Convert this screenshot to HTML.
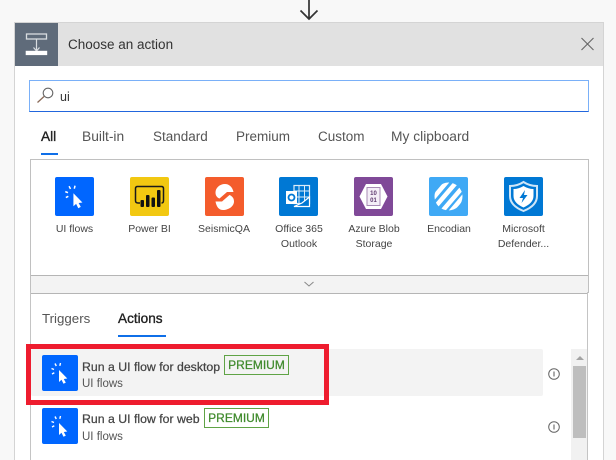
<!DOCTYPE html>
<html><head><meta charset="utf-8">
<style>
html,body{margin:0;padding:0}
body{width:616px;height:460px;position:relative;overflow:hidden;background:#f8f8f8;font-family:"Liberation Sans",sans-serif;color:#333}
#w{position:absolute;left:0;top:0;width:616px;height:460px;overflow:hidden;filter:blur(.3px)}
.a{position:absolute}
.t{position:absolute;white-space:nowrap;line-height:16px}
.ic{position:absolute;top:177px;width:39px;height:39px;border-radius:2px;overflow:hidden}
.lb{position:absolute;width:74px;text-align:center;font-size:10.5px;line-height:15px;color:#444;top:222px}
.tab{position:absolute;top:129px;font-size:13.5px;line-height:16px;color:#555;white-space:nowrap}
.sel{color:#222;font-size:13.7px;-webkit-text-stroke:.35px #222}
.badge{position:absolute;height:18px;width:63px;border:1px solid #5fa345;color:#3f8a2c;font-size:12px;line-height:19px;text-align:center;-webkit-text-stroke:.25px #3f8a2c}
.ri{position:absolute;left:42px;width:36px;height:36px;background:#0066ff;border-radius:2px}
.rt{position:absolute;left:82px;font-size:12.3px;color:#444;white-space:nowrap;line-height:14px;-webkit-text-stroke:.25px #444}
.rs{position:absolute;left:82px;font-size:11.5px;color:#555;white-space:nowrap;line-height:14px}
</style></head><body>
<div id="w">
<svg class="a" style="left:296px;top:0" width="28" height="22" viewBox="0 0 28 22"><path d="M13 0V19M4.500 10.500L13 19L21.500 10.500" fill="none" stroke="#333" stroke-width="1.700"/></svg>

<div class="a" style="left:14px;top:22px;width:588px;height:438px;background:#fff;border:1px solid #d4d4d4;border-bottom:0"></div>
<div class="a" style="left:15px;top:23px;width:588px;height:43px;background:#e1e1e1"></div>
<div class="a" style="left:15px;top:23px;width:43px;height:43px;background:#5f6b7a"></div>
<svg class="a" style="left:15px;top:23px" width="43" height="43" viewBox="0 0 43 43"><rect x="11.500" y="11" width="20" height="5" fill="none" stroke="#d8dce0" stroke-width="1.300"/><path d="M21.500 16V27M18.500 24.500L21.500 28L24.500 24.500" fill="none" stroke="#d8dce0" stroke-width="1.200"/><rect x="10.700" y="27.800" width="21.500" height="4.300" fill="#fff"/></svg>
<div class="t" style="left:68px;top:37px;font-size:13.500px;color:#333">Choose an action</div>
<svg class="a" style="left:580px;top:37px" width="15" height="15" viewBox="0 0 15 15"><path d="M1.500 1L13.500 13M13.500 1L1.500 13" stroke="#666" stroke-width="1.100" fill="none"/></svg>

<div class="a" style="left:29px;top:80px;width:558px;height:30px;border:1px solid #7ab0f8;border-bottom-color:#2266dd"></div>
<svg class="a" style="left:36px;top:87px" width="18" height="18" viewBox="0 0 18 18"><circle cx="12" cy="6" r="4.800" fill="none" stroke="#666" stroke-width="1.100"/><path d="M8 9.500L1.500 15.500" stroke="#8a6a58" stroke-width="1.300"/></svg>
<div class="t" style="left:60px;top:89px;font-size:12.500px;color:#333">ui</div>

<div class="tab sel" style="left:41px">All</div>
<div class="tab" style="left:82px;font-size:13.8px">Built-in</div>
<div class="tab" style="left:153px">Standard</div>
<div class="tab" style="left:236px">Premium</div>
<div class="tab" style="left:318px">Custom</div>
<div class="tab" style="left:391px;font-size:13.8px">My clipboard</div>
<div class="a" style="left:41px;top:153px;width:17px;height:2px;background:#0f6fe8"></div>

<div class="a" style="left:30px;top:159px;width:557px;height:133px;border:1px solid #c0c0c0;border-width:1px 1px 0 1px"></div>
<div class="a" style="left:31px;top:275px;width:557px;height:17px;background:#f3f3f3;border-top:1px solid #b5b5b5;border-bottom:1px solid #b5b5b5"></div>
<svg class="a" style="left:303px;top:281px" width="12" height="7" viewBox="0 0 12 7"><path d="M1.500 1L6 5L10.500 1" fill="none" stroke="#888" stroke-width="1"/></svg>
<div class="a" style="left:30px;top:292px;width:1px;height:168px;background:#c4c4c4"></div>
<div class="a" style="left:587px;top:292px;width:1px;height:168px;background:#c4c4c4"></div>

<!-- connectors -->
<div class="ic" style="left:55px;background:#0066ff"><svg width="39" height="39" viewBox="0 0 36 36"><g fill="none" stroke="#fff" stroke-width="1.400"><path d="M13 8.500L14.300 11M18.500 8L17.800 10.800M9.500 13.500L12 14.500M10 19L12.300 17.800"/></g><path d="M17 15L17 27L19.500 24.800L21.500 28.800L23.800 27.600L21.800 24L25.300 23.500Z" fill="#fff"/></svg></div>
<div class="ic" style="left:130px;background:#f2c811"><svg width="39" height="39" viewBox="0 0 39 39"><path d="M10 26H8Q5.500 26 5.500 23.500V11.500Q5.500 9.500 7.500 9.500H31.500Q33.500 9.500 33.500 11.500V23.500Q33.500 26 31.500 26" fill="none" stroke="#1a1a1a" stroke-width="1.500"/><rect x="10.500" y="23" width="3.500" height="7" rx="1" fill="#111"/><rect x="16" y="18" width="3.500" height="12" rx="1" fill="#111"/><rect x="21.500" y="20.500" width="3.500" height="9.500" rx="1" fill="#111"/><rect x="27" y="13" width="3.500" height="17" rx="1" fill="#111"/></svg></div>
<div class="ic" style="left:205px;background:#f45c2c"><svg width="39" height="39" viewBox="0 0 39 39"><path d="M20 7C14.500 7 10.500 11 10.500 15.500C10.500 18.500 12 20.500 14.500 21.500L22 15H28.500C27.500 10 24 7 20 7Z" fill="#fff"/><path d="M18 33C24 33 29 29 29 24.500C29 21 27 19 24.500 18L17 24.500H10.500C11.500 30 14 33 18 33Z" fill="#fff"/></svg></div>
<div class="ic" style="left:279px;background:#0078d4"><svg width="40" height="39" viewBox="0 0 40 39"><rect x="15" y="8.500" width="15.500" height="18" fill="none" stroke="#dcebf8" stroke-width="1.200"/><path d="M15 14H30.500M15 20H30.500M20 8.500V26M25.500 8.500V26" stroke="#dcebf8" stroke-width="1"/><path d="M15 29.500H30.500V20L23 26Z" fill="#0078d4" stroke="#fff" stroke-width="1.200"/><rect x="7" y="14" width="11" height="13" fill="#fff"/><circle cx="12.500" cy="20.500" r="3" fill="none" stroke="#0078d4" stroke-width="1.800"/></svg></div>
<div class="ic" style="left:354px;background:#804998"><svg width="39" height="39" viewBox="0 0 39 39"><path d="M12 7H27L33.500 19.500L27 32H12L5.500 19.500Z" fill="#fff"/><rect x="13" y="10.500" width="13" height="18" fill="#f4eef7" stroke="#a78bb5" stroke-width="1"/><text x="19.500" y="18" font-size="6" font-family="Liberation Sans" font-weight="bold" fill="#5f3a70" text-anchor="middle">10</text><text x="19.500" y="25" font-size="6" font-family="Liberation Sans" font-weight="bold" fill="#5f3a70" text-anchor="middle">01</text></svg></div>
<div class="ic" style="left:429px;background:#3fa9f5"><svg width="39" height="39" viewBox="0 0 39 39"><defs><clipPath id="e"><circle cx="19.500" cy="19.500" r="14"/></clipPath></defs><g clip-path="url(#e)" stroke="#fff" stroke-width="4.500"><path d="M0 26L22 0M1 36L31 1M9 39L39 4M18 39L40 13"/></g></svg></div>
<div class="ic" style="left:504px;background:#0078d4"><svg width="39" height="39" viewBox="0 0 39 39"><path d="M19.500 5C15 8 11 9 6 9V19C6 26 12 31 19.500 34C27 31 33 26 33 19V9C28 9 24 8 19.500 5Z" fill="none" stroke="#cfe6f8" stroke-width="2"/><path d="M19.500 9C16 11 13 12 9.500 12V19C9.500 24.500 14 28 19.500 30.500C25 28 29.500 24.500 29.500 19V12C26 12 23 11 19.500 9Z" fill="#fff"/><path d="M21 13L15.500 21H19L17.500 26L23.500 18H20Z" fill="#0078d4"/></svg></div>

<div class="lb" style="left:37.500px">UI flows</div>
<div class="lb" style="left:112.500px">Power BI</div>
<div class="lb" style="left:187px">SeismicQA</div>
<div class="lb" style="left:262px">Office 365<br>Outlook</div>
<div class="lb" style="left:337px">Azure Blob<br>Storage</div>
<div class="lb" style="left:412px">Encodian</div>
<div class="lb" style="left:486.500px">Microsoft<br>Defender...</div>

<div class="tab" style="left:42px;top:311px;font-size:13.3px">Triggers</div>
<div class="tab sel" style="left:118px;top:311px;font-size:13.6px">Actions</div>
<div class="a" style="left:118px;top:335px;width:48px;height:2px;background:#0f6fe8"></div>

<!-- rows -->
<div class="a" style="left:31px;top:349px;width:512px;height:47px;background:#f3f3f3;border-radius:2px"></div>
<div class="ri" style="top:355px"><svg width="36" height="36" viewBox="0 0 36 36"><g fill="none" stroke="#fff" stroke-width="1.400"><path d="M13 8.500L14.300 11M18.500 8L17.800 10.800M9.500 13.500L12 14.500M10 19L12.300 17.800"/></g><path d="M17 15L17 27L19.500 24.800L21.500 28.800L23.800 27.600L21.800 24L25.300 23.500Z" fill="#fff"/></svg></div>
<div class="rt" style="top:360px">Run a UI flow for desktop</div>
<div class="rs" style="top:377px">UI flows</div>
<div class="badge" style="left:224px;top:355px">PREMIUM</div>

<div class="ri" style="top:408px"><svg width="36" height="36" viewBox="0 0 36 36"><g fill="none" stroke="#fff" stroke-width="1.400"><path d="M13 8.500L14.300 11M18.500 8L17.800 10.800M9.500 13.500L12 14.500M10 19L12.300 17.800"/></g><path d="M17 15L17 27L19.500 24.800L21.500 28.800L23.800 27.600L21.800 24L25.300 23.500Z" fill="#fff"/></svg></div>
<div class="rt" style="top:412px">Run a UI flow for web</div>
<div class="rs" style="top:430px">UI flows</div>
<div class="badge" style="left:204px;top:408px">PREMIUM</div>

<svg class="a" style="left:547px;top:367px" width="14" height="14" viewBox="0 0 14 14"><circle cx="7" cy="7" r="5.300" fill="none" stroke="#666" stroke-width="1"/><path d="M7 4.500V9.500" stroke="#555" stroke-width="1"/></svg>
<svg class="a" style="left:547px;top:420px" width="14" height="14" viewBox="0 0 14 14"><circle cx="7" cy="7" r="5.300" fill="none" stroke="#666" stroke-width="1"/><path d="M7 4.500V9.500" stroke="#555" stroke-width="1"/></svg>

<div class="a" style="left:571px;top:349px;width:16px;height:111px;background:#f1f1f1"></div>
<div class="a" style="left:576px;top:356px;width:0;height:0;border-left:4px solid transparent;border-right:4px solid transparent;border-bottom:4px solid #a3a3a3"></div>
<div class="a" style="left:573px;top:366px;width:13px;height:72px;background:#bebebe"></div>

<!-- red highlight -->
<div class="a" style="left:26px;top:344px;width:293px;height:51px;border:5px solid #ee1c2e"></div>
</div>
</body></html>
